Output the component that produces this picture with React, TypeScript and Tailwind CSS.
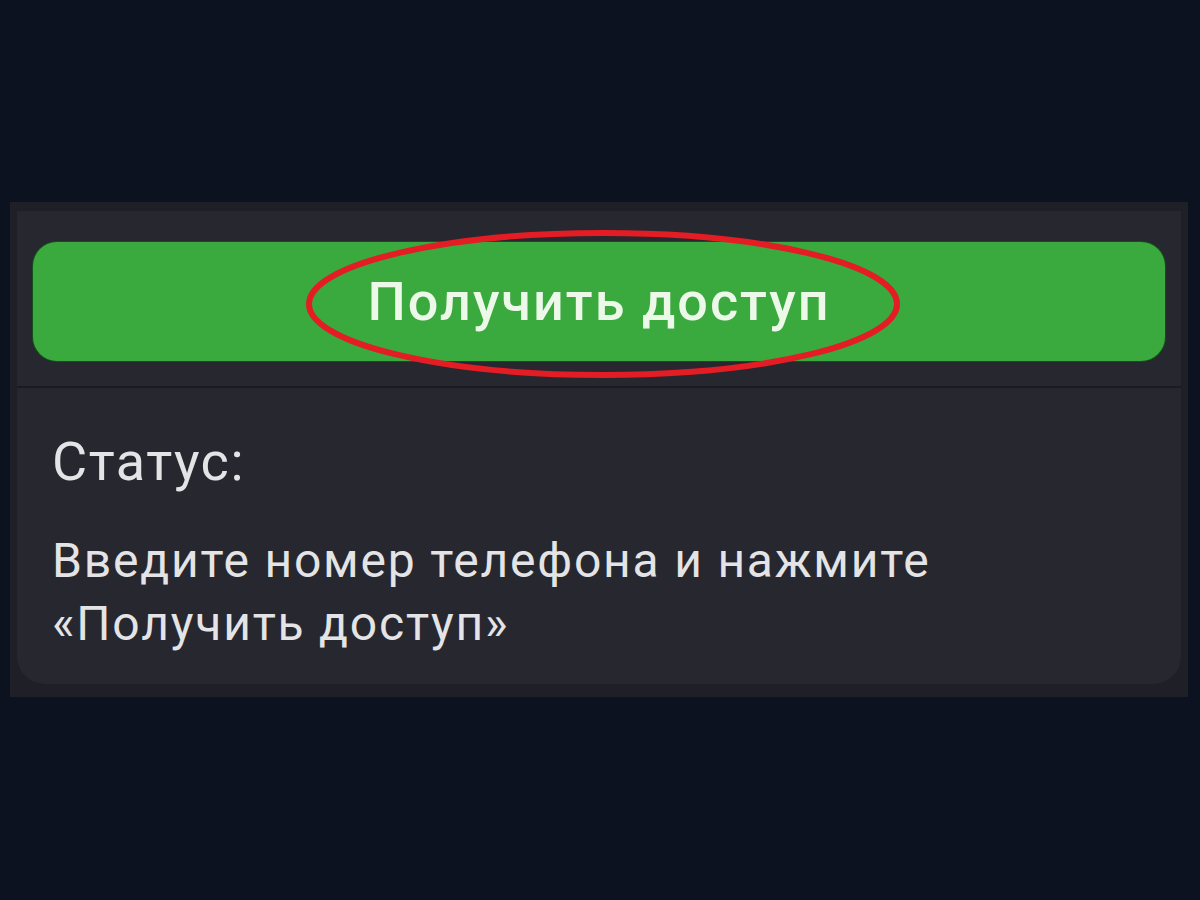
export default function App() {
  return (
    <div className="h-[900px] w-[1200px] bg-[#0c1220] pt-[202px] pl-[10px]" style={{ fontFamily: "Roboto, 'Noto Sans', sans-serif" }}>
      <div className="w-[1178px] bg-[#1f2027] px-[7px] pt-[9px] pb-[13px]">
        <div className="rounded-b-[28px] bg-[#27272f]">
          <div className="px-[16px] pt-[31px] pb-[25px]">
            <div className="relative">
              <button className="flex h-[119px] w-full items-center justify-center rounded-[24px] bg-[#3aa93e] text-[54px] font-medium tracking-[2px] text-[#ecf8e8] shadow-[0_0_0_1px_#14501a]">
                Получить доступ
              </button>
              <svg className="pointer-events-none absolute left-[271px] top-[-13px]" width="598" height="150" viewBox="0 0 598 150">
                <ellipse cx="299" cy="75" rx="294" ry="71" fill="none" stroke="#e41c24" strokeWidth="6" />
              </svg>
            </div>
          </div>
          <div className="h-[2px] bg-[#1b1b21]" />
          <div className="px-[35px] pt-[44px] pb-[29px] text-[#e4e4e6]">
            <p className="text-[54px] leading-[60px] tracking-[1.5px]">Статус:</p>
            <p className="mt-[37px] text-[48px] leading-[63px] tracking-[1.8px]">
              Введите номер телефона и нажмите
              <br />
              «Получить доступ»
            </p>
          </div>
        </div>
      </div>
    </div>
  );
}
